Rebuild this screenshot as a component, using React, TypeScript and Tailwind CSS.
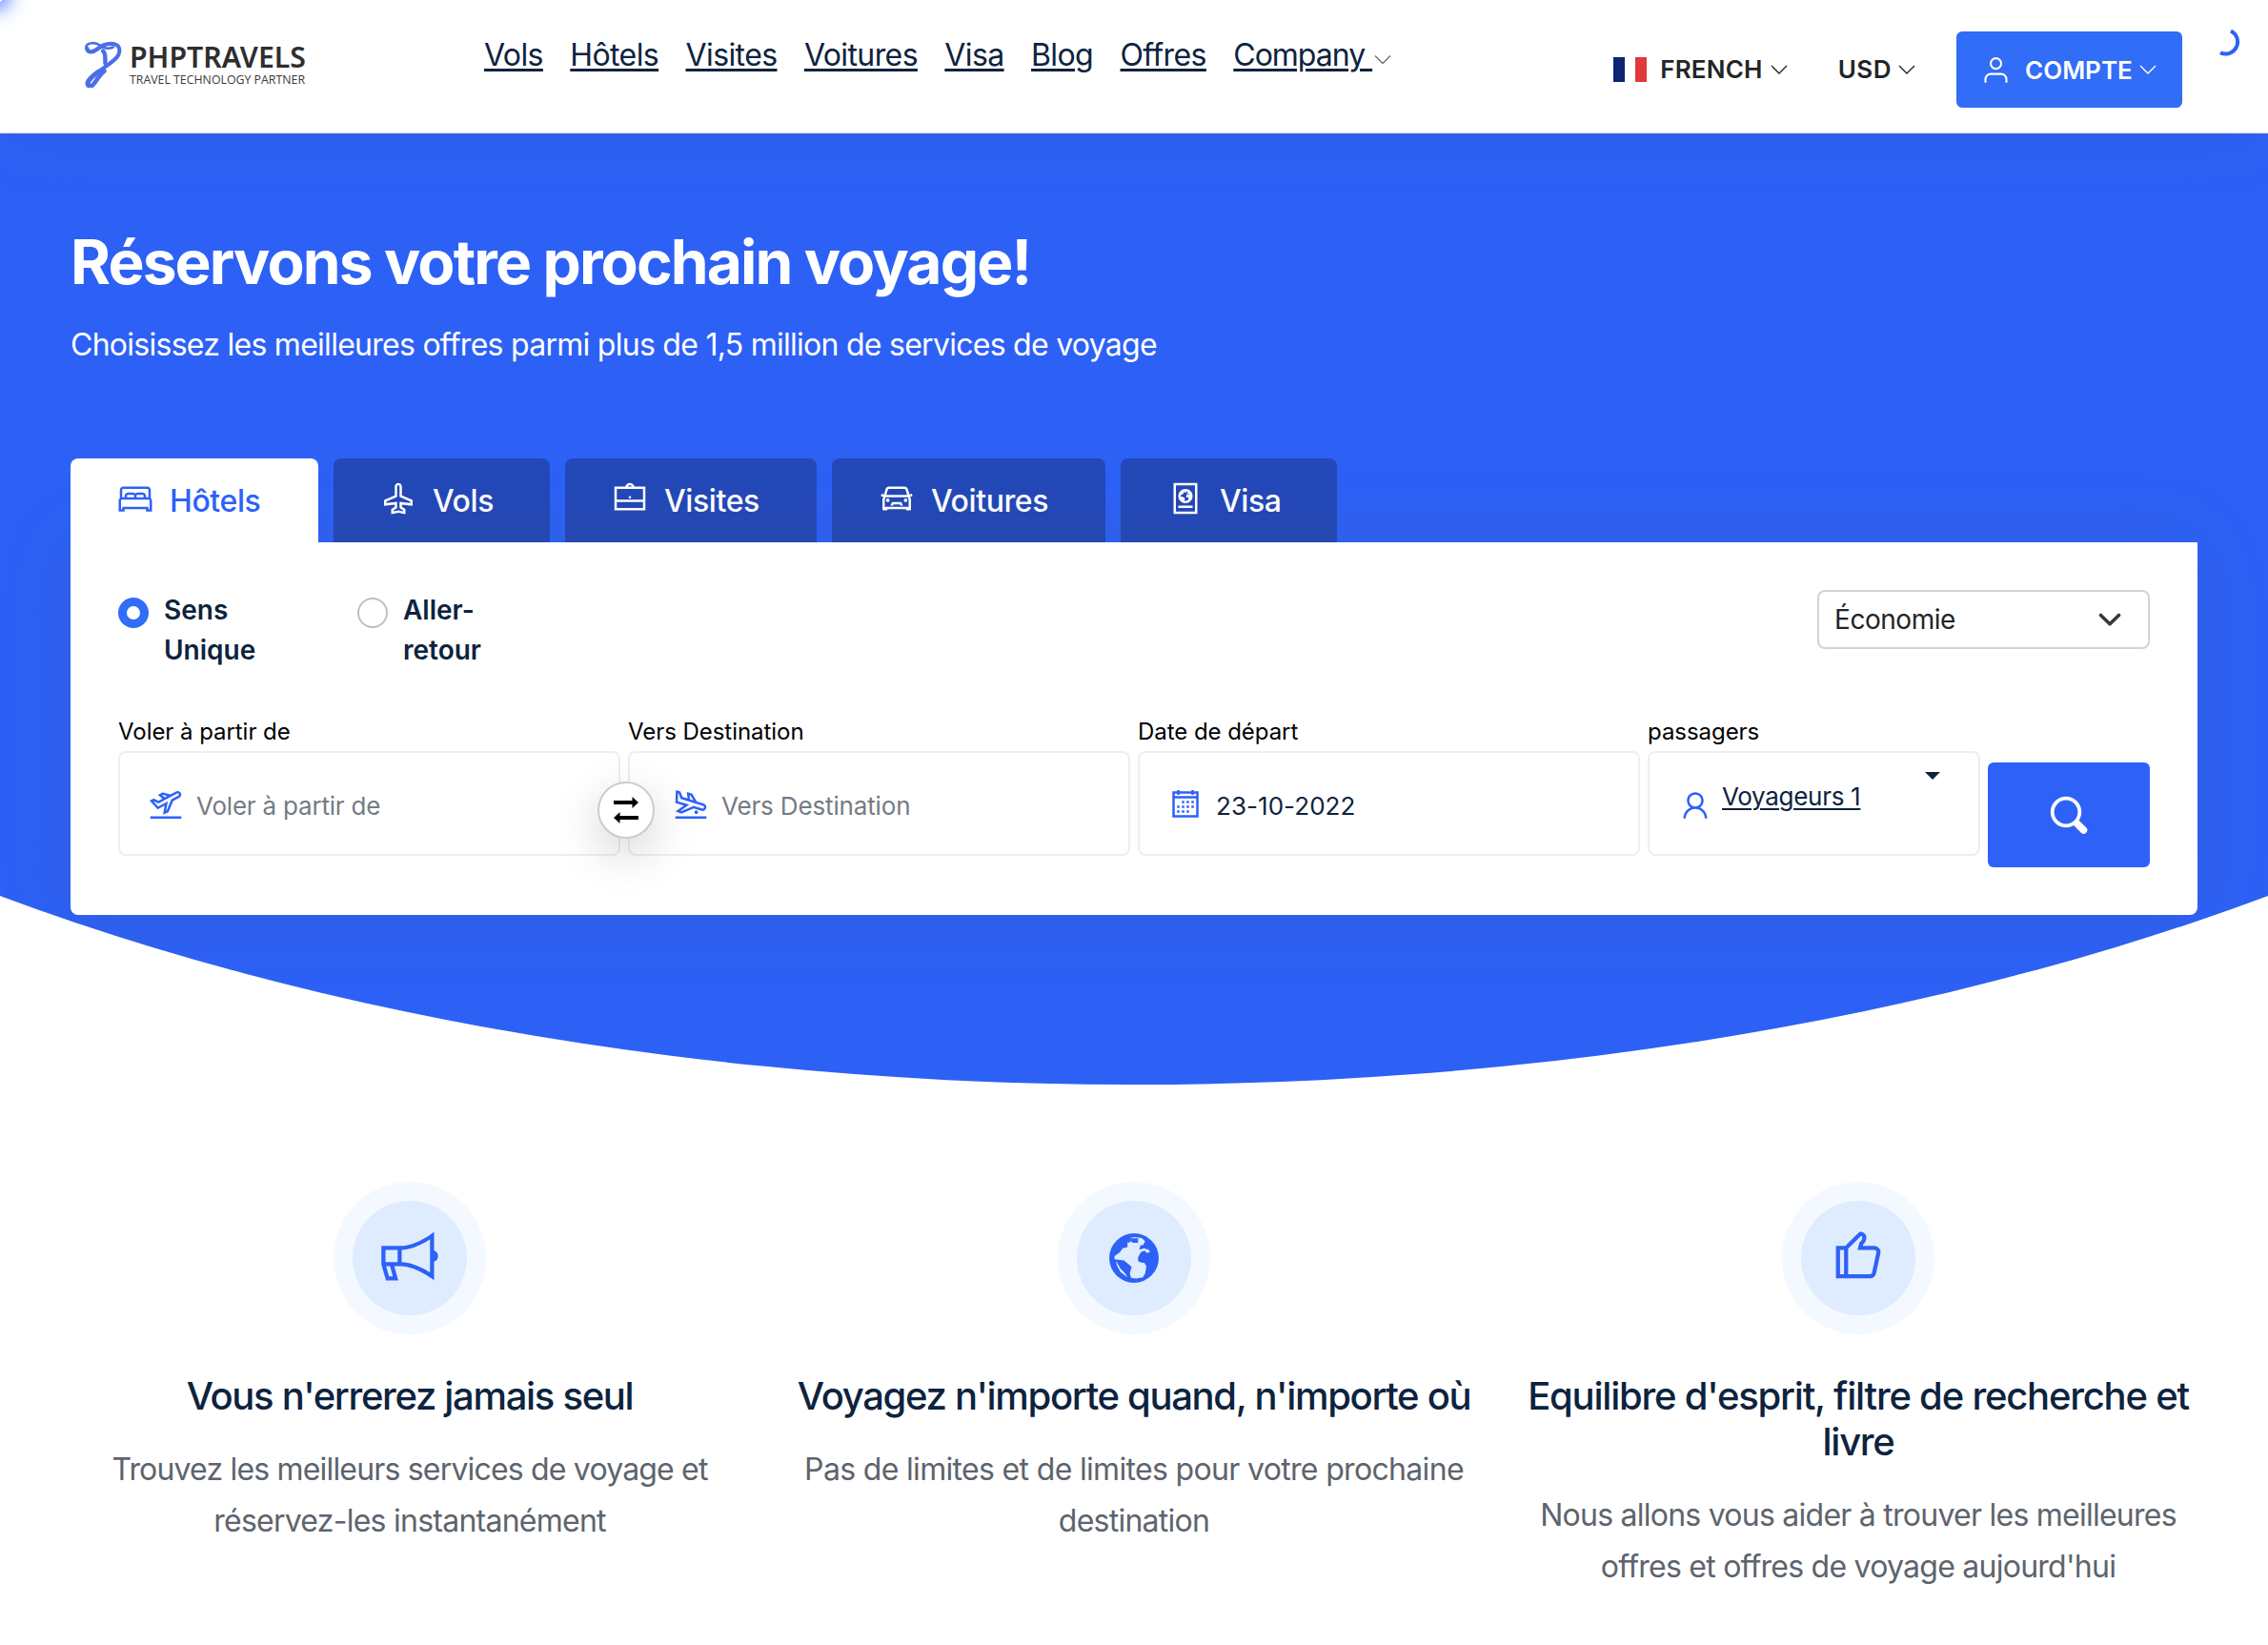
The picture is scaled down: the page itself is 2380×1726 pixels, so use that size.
import type { ComponentType, ReactNode } from "react";
import {
  LiaBedSolid,
  LiaBriefcaseSolid,
  LiaBullhornSolid,
  LiaCalendar,
  LiaCarSolid,
  LiaPassportSolid,
  LiaPlaneArrivalSolid,
  LiaPlaneDepartureSolid,
  LiaPlaneSolid,
  LiaThumbsUp,
  LiaUser,
} from "react-icons/lia";

type Icon = ComponentType<{ className?: string }>;

const navLinks = ["Vols", "Hôtels", "Visites", "Voitures", "Visa", "Blog", "Offres"];

const tabs: { label: string; icon: Icon; box: string }[] = [
  { label: "Hôtels", icon: LiaBedSolid, box: "relative z-10 w-[260px] bg-white text-[#2d61f8]" },
  { label: "Vols", icon: LiaPlaneSolid, box: "w-[227px] bg-[#2348b8] text-white" },
  { label: "Visites", icon: LiaBriefcaseSolid, box: "w-[264px] bg-[#2348b8] text-white" },
  { label: "Voitures", icon: LiaCarSolid, box: "w-[287px] bg-[#2348b8] text-white" },
  { label: "Visa", icon: LiaPassportSolid, box: "w-[227px] bg-[#2348b8] text-white" },
];

function Chevron({ className = "" }: { className?: string }) {
  return (
    <svg viewBox="0 0 18 10" fill="none" stroke="currentColor" strokeWidth="1.4" className={`h-[10px] w-[18px] ${className}`}>
      <path d="M1 1l8 8 8-8" />
    </svg>
  );
}

function Globe() {
  return (
    <svg viewBox="0 0 51.500 51.500" className="size-[52px]">
      <circle cx="25.750" cy="25.750" r="25.700" fill="#2d61f8" />
      <path
        fill="#dfecff"
        d="M19 9.300L21.400 10 22 5 26.300 4 33.700 5 37.400 8.300 35 12.300 32.500 12.300 31.200 17 36 15.700 41 17 42.300 19.700 38.600 20.300 37.400 18.300Q34 18 32.500 20.300L30 25V29L32.500 30.300 36.700 31 38.600 34.300 37.400 41.700 35 45.700 28.200 47 22.700 46.300 21.400 41.700 23.300 35 20.200 32.300 15.300 28.300 5.500 27V23.700L11 19.700 14 15.700 19 14.300zM7 28.500L8 33.300 11.600 40 19 45.700 16.500 41.700 11.600 36.700z"
      />
      <path fill="#2d61f8" d="M22 5.300h8V10h-5l-3-1.700z" />
    </svg>
  );
}

function Logo() {
  return (
    <svg viewBox="0 0 240 52" className="h-[52px] w-[240px] overflow-visible">
      <g fill="none" stroke="#4b6eea" strokeLinecap="round" strokeLinejoin="round">
        <path strokeWidth="2.600" d="M2.500 6.500C4 2.500 12 2 17 5.500C21 9 26 9.500 31 7.500" />
        <path strokeWidth="4.200" d="M3 8.500C4 13.500 9 13.500 14 9.500C20 4.500 25 3.200 31 4" />
        <path strokeWidth="4" d="M31 4C38.500 5.500 38.500 12 35.500 17C31 23.500 20 29 12 35.500" />
        <path strokeWidth="5.200" d="M15 33.500C6 40 2 45.500 5 47.500" />
        <path strokeWidth="4.600" d="M8.500 48C13.500 44 15 37 21.500 32.500" />
        <path strokeWidth="4.400" d="M20 11.500C23.500 14 22 20 22.500 24.500" />
      </g>
      <text x="48" y="28.600" textLength="185" lengthAdjust="spacingAndGlyphs" className="fill-[#2e2e2e] font-['Noto_Sans'] text-[31px] font-semibold">
        PHPTRAVELS
      </text>
      <text x="48" y="46" textLength="184" lengthAdjust="spacingAndGlyphs" className="fill-[#3a3a3a] font-['Open_Sans'] text-[13px] font-normal">
        TRAVEL TECHNOLOGY PARTNER
      </text>
    </svg>
  );
}

function Header() {
  return (
    <header className="relative z-10 flex h-[140px] items-start border-b-2 border-[#eeeeee] bg-white shadow-[0_0_80px_rgba(82,85,90,0.1)]">
      <div className="ml-[88px] mt-[42px] w-[420px]">
        <Logo />
      </div>
      <nav className="mt-[34px] flex gap-[28.4px] text-[32px] leading-[48px] tracking-[-0.6px] text-[#0d233e]">
        {navLinks.map((link) => (
          <a key={link} className="underline decoration-[3px] underline-offset-[3px]">
            {link}
          </a>
        ))}
        <span className="flex items-center whitespace-pre">
          <a className="tracking-[-1px] underline decoration-[3px] underline-offset-[3px]">Company </a>
          <Chevron className="ml-0.5 mt-2 h-[11px] w-5 text-[#6b7380]" />
        </span>
      </nav>
      <div className="ml-auto mr-[90px] mt-[33px] flex h-20 items-center text-[26px] font-semibold text-[#212529]">
        <span className="mb-px flex h-[26px] w-[35px]">
          <span className="w-3 bg-[#0b2475]" />
          <span className="flex-1" />
          <span className="w-3 bg-[#e1393c]" />
        </span>
        <span className="mb-px ml-[14px] tracking-[0.2px]">FRENCH</span>
        <Chevron className="ml-[8px]" />
        <span className="mb-px ml-[53px] tracking-[0.5px]">USD</span>
        <Chevron className="ml-[7px] mr-[43px]" />
        <button className="flex h-20 w-[237px] items-center rounded-md bg-[#316df6] pl-[25px] text-white">
          <svg viewBox="0 0 24 24" fill="none" stroke="currentColor" strokeWidth="1.500" strokeLinecap="round" className="size-[33px]">
            <path d="M20 21v-2a4 4 0 0 0-4-4H8a4 4 0 0 0-4 4v2" />
            <circle cx="12" cy="7" r="4" />
          </svg>
          <span className="ml-[14px] tracking-normal">COMPTE</span>
          <Chevron className="ml-[7px]" />
        </button>
      </div>
      <svg viewBox="0 0 30 30" fill="none" stroke="#2d61f8" strokeWidth="4" className="absolute left-[2321px] top-[29px] size-[30px]">
        <path d="M20 3.500A12.200 12.200 0 0 1 9 26.200" />
      </svg>
      <span className="absolute -left-[9px] -top-[9px] size-[12px] rounded-full shadow-[0_0_20px_6px_#2d61f8]" />
    </header>
  );
}

function Radio({ checked, children }: { checked?: boolean; children: ReactNode }) {
  return (
    <label className="flex w-[251px] gap-4">
      <span
        className={
          checked
            ? "mt-2 flex size-8 items-center justify-center rounded-full bg-[#316df6]"
            : "mt-2 size-8 rounded-full border-2 border-[#bfbfbf]"
        }
      >
        {checked && <span className="size-[14px] rounded-full bg-white" />}
      </span>
      <span className="text-[28px] font-semibold leading-[42px] text-[#0d233e]">{children}</span>
    </label>
  );
}

function Field({ label, span, children }: { label: string; span: string; children: ReactNode }) {
  return (
    <div className={span}>
      <div className="h-[38px] text-[24px] leading-[36px] tracking-[-0.05px] text-black">{label}</div>
      <div className="relative flex h-[110px] items-center rounded-lg border-2 border-[#eeeeee] text-[26px]">{children}</div>
    </div>
  );
}

function SwapButton() {
  return (
    <button className="absolute -right-[38px] top-[30px] z-10 flex size-[60px] items-center justify-center rounded-full border-2 border-[#cccccc] bg-white shadow-[0_16px_48px_rgba(0,0,0,0.18)]">
      <svg viewBox="0 0 26 30" fill="black" className="h-[30px] w-[26px]">
        <path d="M0 5h19.500V1L26 7l-6.500 6V9H0zM26 21H6.500v-4L0 23l6.500 6v-4H26z" />
      </svg>
    </button>
  );
}

function SearchCard() {
  return (
    <div className="relative h-[391px] rounded-b-lg bg-white px-[50px] shadow-[0_0_80px_rgba(82,85,90,0.15)]">
      <div className="flex pt-[50px]">
        <Radio checked>
          Sens
          <br />
          Unique
        </Radio>
        <Radio>
          Aller-
          <br />
          retour
        </Radio>
        <div className="ml-auto flex h-[62px] w-[349px] items-center justify-between rounded-lg border-2 border-[#ced4da] pl-4 pr-[28px] text-[28px] tracking-[-0.45px] text-[#212529]">
          Économie
          <svg viewBox="0 0 24 14" fill="none" stroke="#343a40" strokeWidth="3.600" strokeLinecap="round" strokeLinejoin="round" className="h-[14px] w-6">
            <path d="M2.500 2.500l9.500 9.200 9.500-9.200" />
          </svg>
        </div>
      </div>
      <div className="mt-[47px] grid grid-cols-12 gap-2">
        <Field label="Voler à partir de" span="col-span-3">
          <LiaPlaneDepartureSolid className="ml-7 mt-px size-10 text-[#2d61f8]" />
          <span className="ml-[12px] mt-1 tracking-[-0.2px] text-[#757b83]">Voler à partir de</span>
          <SwapButton />
        </Field>
        <Field label="Vers Destination" span="col-span-3">
          <LiaPlaneArrivalSolid className="ml-[44px] mt-px size-10 text-[#2d61f8]" />
          <span className="ml-[12px] mt-1 tracking-[-0.15px] text-[#757b83]">Vers Destination</span>
        </Field>
        <Field label="Date de départ" span="col-span-3">
          <LiaCalendar className="ml-7 mt-0.5 size-10 text-[#2d61f8]" />
          <span className="ml-[12px] mt-1 tracking-[0.05px] text-[#0d233e]">23-10-2022</span>
        </Field>
        <Field label="passagers" span="col-span-2">
          <LiaUser className="ml-7 mt-[3px] size-10 text-[#2d61f8]" />
          <span className="mb-4 ml-[8px] tracking-[-0.3px] text-[#0d233e] underline decoration-2 underline-offset-[3px]">Voyageurs 1</span>
          <span className="mb-[58px] ml-auto mr-[40px] border-x-8 border-t-8 border-x-transparent border-t-[#0d233e]" />
        </Field>
        <button className="mt-[50px] flex h-[110px] items-center justify-center rounded-md bg-[#2d61f8]">
          <svg viewBox="0 0 40 40" fill="none" stroke="white" className="size-10">
            <circle cx="17" cy="17" r="14.300" strokeWidth="3.800" />
            <path d="M29 29.500l6.500 6.500" strokeWidth="7.500" strokeLinecap="round" />
          </svg>
        </button>
      </div>
    </div>
  );
}

function Hero() {
  return (
    <section className="h-[998px] bg-[#2d61f6] px-[74px] pt-[87px] [clip-path:ellipse(2000px_1009px_at_1190px_-11px)]">
      <h1 className="text-[64px] font-bold leading-[96px] tracking-[-1.87px] text-white">Réservons votre prochain voyage!</h1>
      <p className="mt-[15px] text-[32px] leading-[48px] tracking-[-0.73px] text-white">
        Choisissez les meilleures offres parmi plus de 1,5 million de services de voyage
      </p>
      <div className="mt-[95px] flex gap-4">
        {tabs.map(({ label, icon: TabIcon, box }) => (
          <div key={label} className={`flex h-[88px] items-center rounded-t-lg pl-[48px] text-[32px] font-medium tracking-[-0.4px] ${box}`}>
            <TabIcon className="mb-[5px] size-10" />
            <span className="ml-[16px] mt-px">{label}</span>
          </div>
        ))}
      </div>
      <SearchCard />
    </section>
  );
}

function Feature({ icon, title, children }: { icon: ReactNode; title: ReactNode; children: ReactNode }) {
  return (
    <div className="flex flex-col items-center text-center">
      <div className="flex size-40 items-center justify-center rounded-full bg-[#f3f9ff]">
        <div className="flex size-[120px] items-center justify-center rounded-full bg-[#dfecff] text-[#2d61f8]">{icon}</div>
      </div>
      <h4 className="mt-[41px] text-[40px] font-medium leading-[48px] tracking-[-1.32px] text-[#0d233e]">{title}</h4>
      <p className="mt-[26px] text-[32px] leading-[54.4px] tracking-[-0.75px] text-[#5d646d]">{children}</p>
    </div>
  );
}

export default function App() {
  return (
    <div className="h-[1726px] w-[2380px] overflow-hidden bg-white font-['Inter',sans-serif]">
      <Header />
      <Hero />
      <section className="mx-[50px] mt-[102px] grid grid-cols-3">
        <Feature icon={<LiaBullhornSolid className="size-[68px]" />} title="Vous n'errerez jamais seul">
          <span className="tracking-[-0.82px]">Trouvez les meilleurs services de voyage et</span>
          <br />
          réservez-les instantanément
        </Feature>
        <Feature icon={<Globe />} title="Voyagez n'importe quand, n'importe où">
          <span className="tracking-[-0.67px]">Pas de limites et de limites pour votre prochaine</span>
          <br />
          destination
        </Feature>
        <Feature
          icon={<LiaThumbsUp className="size-[68px]" />}
          title={
            <>
              <span className="tracking-[-1.21px]">Equilibre d'esprit, filtre de recherche et</span>
              <br />
              livre
            </>
          }
        >
          Nous allons vous aider à trouver les meilleures
          <br />
          offres et offres de voyage aujourd'hui
        </Feature>
      </section>
    </div>
  );
}
